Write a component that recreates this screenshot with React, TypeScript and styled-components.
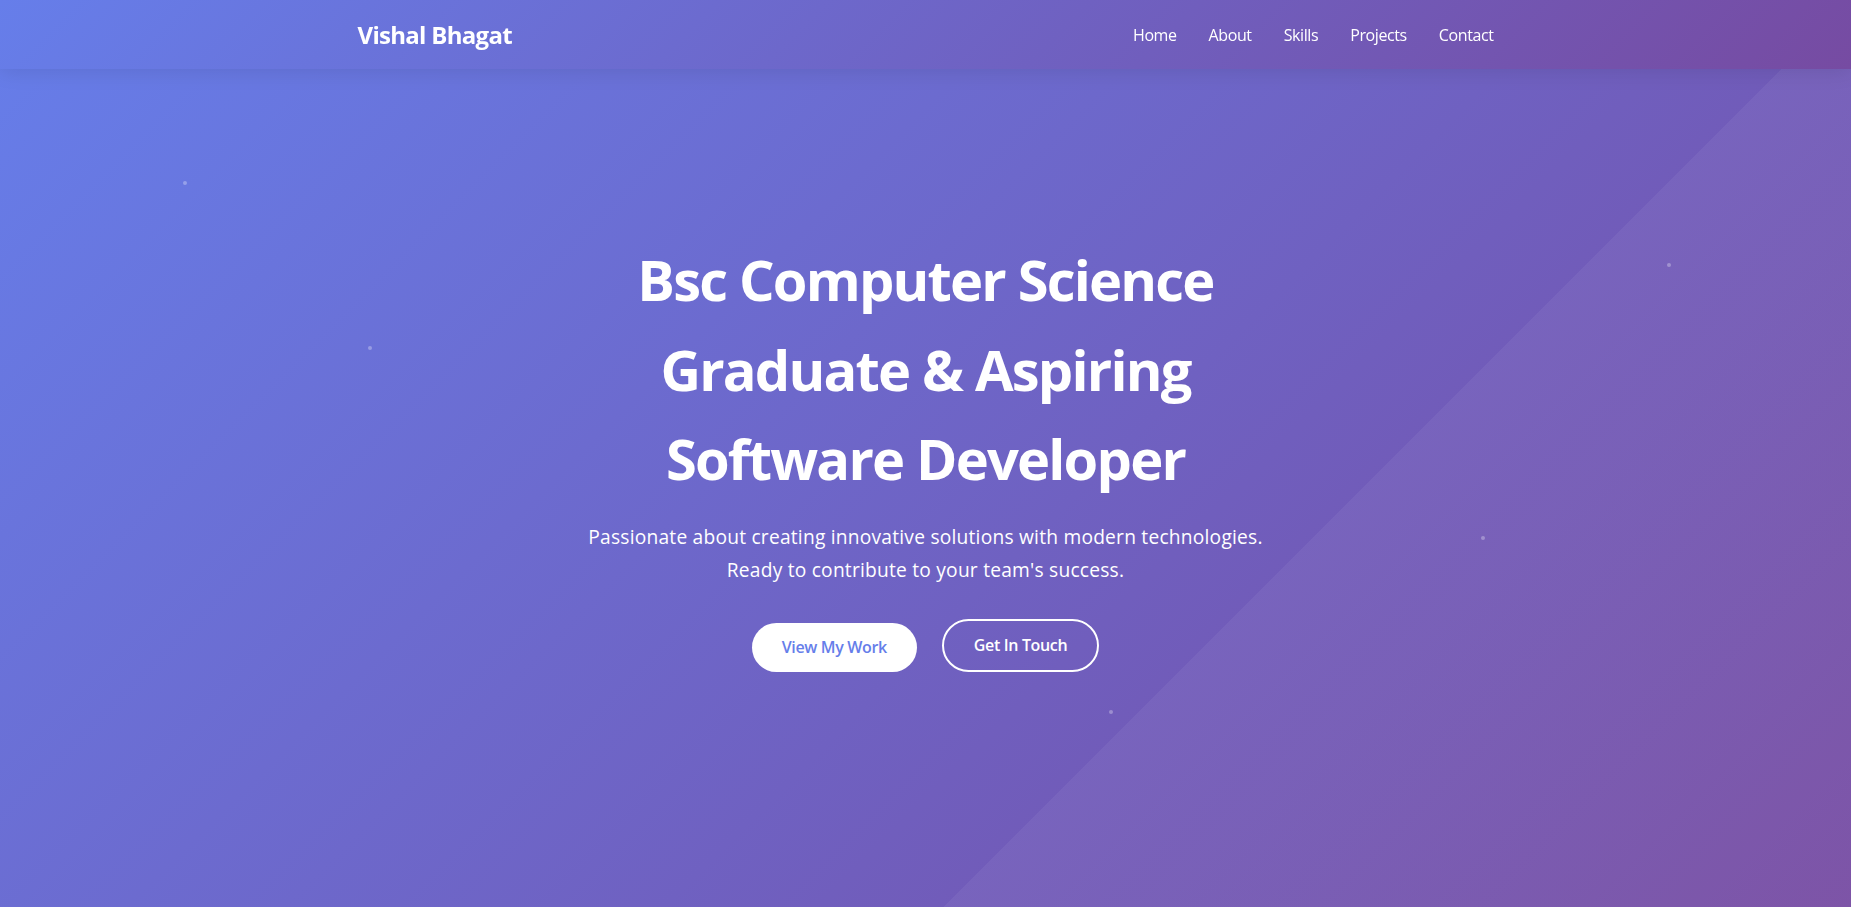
import React from "react";
import styled, { createGlobalStyle } from "styled-components";

const GlobalStyle = createGlobalStyle`
  * { margin: 0; padding: 0; box-sizing: border-box; }
  html, body { width: 100%; height: 100%; overflow: hidden; }
  body {
    font-family: "Segoe UI", "Open Sans", "Noto Sans", sans-serif;
    color: #333;
    background: #ffffff;
  }
`;

const Header = styled.header`
  position: fixed;
  top: 0;
  left: 0;
  width: 100%;
  z-index: 10;
  background: linear-gradient(135deg, #667eea 0%, #764ba2 100%);
  box-shadow: 0 2px 20px rgba(0, 0, 0, 0.1);
`;

const Nav = styled.nav`
  max-width: 1200px;
  margin: 0 auto;
  padding: 0 2rem;
  height: 69px;
  display: flex;
  align-items: center;
  justify-content: space-between;
`;

const Logo = styled.a`
  font-size: 1.5rem;
  font-weight: 700;
  letter-spacing: -0.7px;
  color: #ffffff;
  text-decoration: none;
`;

const NavLinks = styled.ul`
  display: flex;
  list-style: none;
  gap: 2rem;
`;

const NavLink = styled.a`
  font-size: 1rem;
  letter-spacing: -0.4px;
  color: #ffffff;
  text-decoration: none;
`;

const Hero = styled.section`
  position: relative;
  height: 100vh;
  display: flex;
  align-items: center;
  justify-content: center;
  text-align: center;
  color: #ffffff;
  overflow: hidden;
  background:
    linear-gradient(135deg, transparent 50%, rgba(255, 255, 255, 0.05) 50%) 0 0 / 100vw 100vw no-repeat,
    linear-gradient(135deg, #667eea 0%, #764ba2 100%);
`;

const Particle = styled.span`
  position: absolute;
  width: 4px;
  height: 4px;
  border-radius: 50%;
  background: rgba(255, 255, 255, 0.3);
`;

const HeroContent = styled.div`
  position: relative;
  z-index: 1;
  max-width: 800px;
  padding: 0 2rem;
`;

const Title = styled.h1`
  font-size: 3.5rem;
  font-weight: 700;
  letter-spacing: -1.8px;
  line-height: 1.6;
  margin-bottom: 1rem;
`;

const Subtitle = styled.p`
  font-size: 1.2rem;
  letter-spacing: 0.22px;
  line-height: 1.75;
  margin-bottom: 2rem;
`;

const Buttons = styled.div`
  display: flex;
  justify-content: center;
  align-items: flex-end;
  gap: 25px;
`;

const Button = styled.a<{ $outline?: boolean }>`
  display: inline-block;
  padding: 15px 30px;
  border-radius: 50px;
  font-size: 1rem;
  font-weight: 600;
  letter-spacing: -0.35px;
  text-decoration: none;
  line-height: 1.2;
  background: ${(p) => (p.$outline ? "transparent" : "#ffffff")};
  color: ${(p) => (p.$outline ? "#ffffff" : "#667eea")};
  border: ${(p) => (p.$outline ? "2px solid #ffffff" : "none")};
`;

const particles = [
  { x: 183, y: 181 },
  { x: 368, y: 346 },
  { x: 1667, y: 263 },
  { x: 1481, y: 536 },
  { x: 1109, y: 710 },
];

export default function App() {
  return (
    <>
      <GlobalStyle />
      <Header>
        <Nav>
          <Logo href="#">Vishal Bhagat</Logo>
          <NavLinks>
            {["Home", "About", "Skills", "Projects", "Contact"].map((l) => (
              <li key={l}>
                <NavLink href="#">{l}</NavLink>
              </li>
            ))}
          </NavLinks>
        </Nav>
      </Header>
      <Hero>
        {particles.map((p, i) => (
          <Particle key={i} style={{ left: p.x, top: p.y }} />
        ))}
        <HeroContent>
          <Title>
            Bsc Computer Science
            <br />
            Graduate &amp; Aspiring
            <br />
            Software Developer
          </Title>
          <Subtitle>
            Passionate about creating innovative solutions with modern technologies.
            <br />
            Ready to contribute to your team's success.
          </Subtitle>
          <Buttons>
            <Button href="#">View My Work</Button>
            <Button href="#" $outline>
              Get In Touch
            </Button>
          </Buttons>
        </HeroContent>
      </Hero>
    </>
  );
}
